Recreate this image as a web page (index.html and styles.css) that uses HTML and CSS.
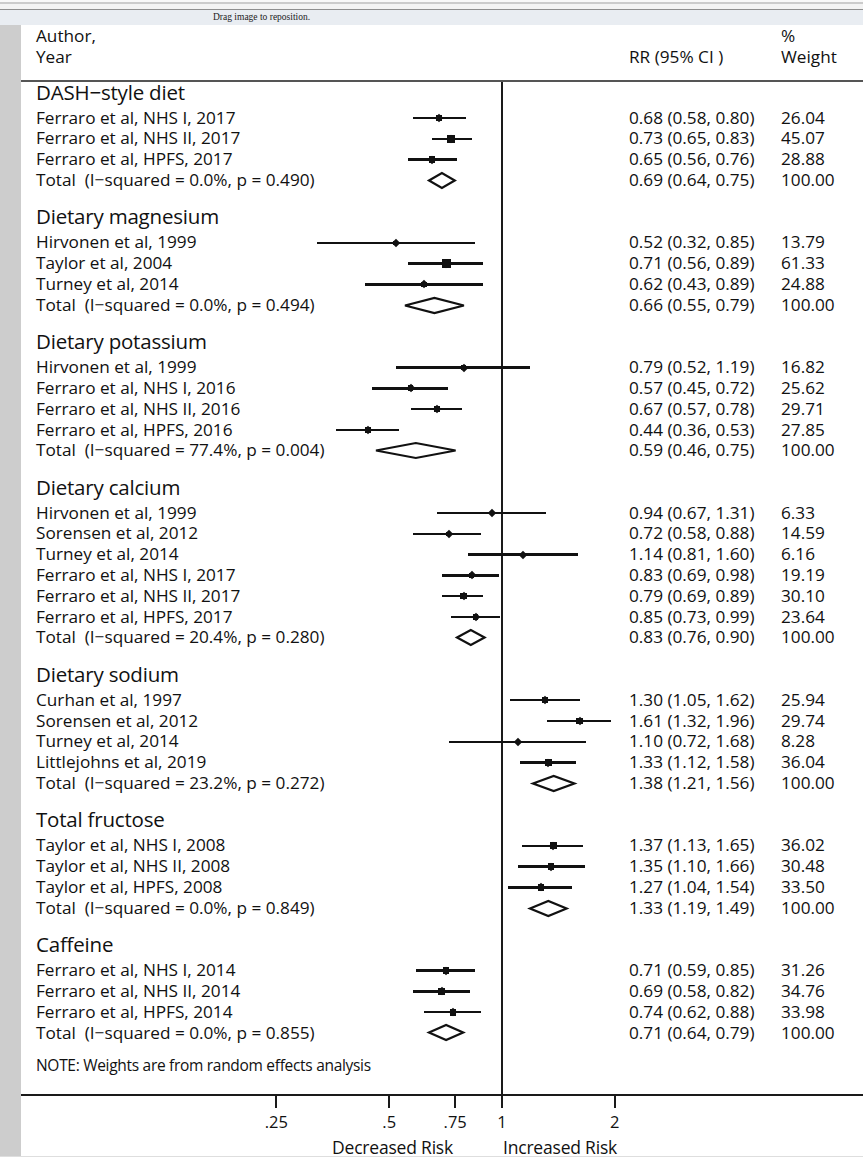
FILE: index.html
```html
<!DOCTYPE html>
<html lang="en">
<head>
<meta charset="utf-8">
<title>Forest plot</title>
<link rel="stylesheet" href="styles.css">
</head>
<body>
<div class="topbar"></div>
<div class="dragbar"><span>Drag image to reposition.</span></div>
<div class="main">
  <div class="strip"></div>
  <div class="content">
    <div class="colhead">
      <div class="ch-label">Author,<br>Year</div>
      <div class="ch-rr">RR (95% CI )</div>
      <div class="ch-w">%<br>Weight</div>
    </div>
    <div class="body">
      <div class="refline"></div>

      <section class="group first">
        <div class="ghead">DASH−style diet</div>
        <div class="row" style="--lo:392.4px;--hi:444.7px;--e:418.2px;--s:5.9px"><span class="lab">Ferraro et al, NHS I, 2017</span><span class="rr">0.68 (0.58, 0.80)</span><span class="w">26.04</span><span class="ci"></span><span class="box"></span><span class="pt"></span></div>
        <div class="row" style="--lo:410.9px;--hi:450.7px;--e:429.8px;--s:7.7px"><span class="lab">Ferraro et al, NHS II, 2017</span><span class="rr">0.73 (0.65, 0.83)</span><span class="w">45.07</span><span class="ci"></span><span class="box"></span><span class="pt"></span></div>
        <div class="row" style="--lo:386.6px;--hi:436.3px;--e:410.9px;--s:6.2px"><span class="lab">Ferraro et al, HPFS, 2017</span><span class="rr">0.65 (0.56, 0.76)</span><span class="w">28.88</span><span class="ci"></span><span class="box"></span><span class="pt"></span></div>
        <div class="row total" style="--lo:408.4px;--hi:434.2px"><span class="lab">Total  (I−squared = 0.0%, p = 0.490)</span><span class="rr">0.69 (0.64, 0.75)</span><span class="w">100.00</span><svg class="dia" viewBox="0 0 100 100" preserveAspectRatio="none"><polygon points="0,50 50,0 100,50 50,100"/></svg></div>
      </section>

      <section class="group">
        <div class="ghead">Dietary magnesium</div>
        <div class="row" style="--lo:295.6px;--hi:454.5px;--e:374.6px;--s:4.3px"><span class="lab">Hirvonen et al, 1999</span><span class="rr">0.52 (0.32, 0.85)</span><span class="w">13.79</span><span class="ci"></span><span class="box"></span><span class="pt"></span></div>
        <div class="row" style="--lo:386.6px;--hi:462.0px;--e:425.3px;--s:9px"><span class="lab">Taylor et al, 2004</span><span class="rr">0.71 (0.56, 0.89)</span><span class="w">61.33</span><span class="ci"></span><span class="box"></span><span class="pt"></span></div>
        <div class="row" style="--lo:343.7px;--hi:462.0px;--e:403.2px;--s:5.7px"><span class="lab">Turney et al, 2014</span><span class="rr">0.62 (0.43, 0.89)</span><span class="w">24.88</span><span class="ci"></span><span class="box"></span><span class="pt"></span></div>
        <div class="row total" style="--lo:383.7px;--hi:442.6px"><span class="lab">Total  (I−squared = 0.0%, p = 0.494)</span><span class="rr">0.66 (0.55, 0.79)</span><span class="w">100.00</span><svg class="dia" viewBox="0 0 100 100" preserveAspectRatio="none"><polygon points="0,50 50,0 100,50 50,100"/></svg></div>
      </section>

      <section class="group">
        <div class="ghead">Dietary potassium</div>
        <div class="row" style="--lo:374.6px;--hi:509.3px;--e:442.6px;--s:4.7px"><span class="lab">Hirvonen et al, 1999</span><span class="rr">0.79 (0.52, 1.19)</span><span class="w">16.82</span><span class="ci"></span><span class="box"></span><span class="pt"></span></div>
        <div class="row" style="--lo:351.1px;--hi:427.5px;--e:389.5px;--s:5.8px"><span class="lab">Ferraro et al, NHS I, 2016</span><span class="rr">0.57 (0.45, 0.72)</span><span class="w">25.62</span><span class="ci"></span><span class="box"></span><span class="pt"></span></div>
        <div class="row" style="--lo:389.5px;--hi:440.6px;--e:415.8px;--s:6.3px"><span class="lab">Ferraro et al, NHS II, 2016</span><span class="rr">0.67 (0.57, 0.78)</span><span class="w">29.71</span><span class="ci"></span><span class="box"></span><span class="pt"></span></div>
        <div class="row" style="--lo:314.7px;--hi:377.7px;--e:347.4px;--s:6.1px"><span class="lab">Ferraro et al, HPFS, 2016</span><span class="rr">0.44 (0.36, 0.53)</span><span class="w">27.85</span><span class="ci"></span><span class="box"></span><span class="pt"></span></div>
        <div class="row total" style="--lo:354.6px;--hi:434.2px"><span class="lab">Total  (I−squared = 77.4%, p = 0.004)</span><span class="rr">0.59 (0.46, 0.75)</span><span class="w">100.00</span><svg class="dia" viewBox="0 0 100 100" preserveAspectRatio="none"><polygon points="0,50 50,0 100,50 50,100"/></svg></div>
      </section>

      <section class="group">
        <div class="ghead">Dietary calcium</div>
        <div class="row" style="--lo:415.8px;--hi:524.9px;--e:470.9px;--s:2.9px"><span class="lab">Hirvonen et al, 1999</span><span class="rr">0.94 (0.67, 1.31)</span><span class="w">6.33</span><span class="ci"></span><span class="box"></span><span class="pt"></span></div>
        <div class="row" style="--lo:392.4px;--hi:460.2px;--e:427.5px;--s:4.4px"><span class="lab">Sorensen et al, 2012</span><span class="rr">0.72 (0.58, 0.88)</span><span class="w">14.59</span><span class="ci"></span><span class="box"></span><span class="pt"></span></div>
        <div class="row" style="--lo:446.7px;--hi:557.5px;--e:502.3px;--s:2.9px"><span class="lab">Turney et al, 2014</span><span class="rr">1.14 (0.81, 1.60)</span><span class="w">6.16</span><span class="ci"></span><span class="box"></span><span class="pt"></span></div>
        <div class="row" style="--lo:420.6px;--hi:477.7px;--e:450.7px;--s:5px"><span class="lab">Ferraro et al, NHS I, 2017</span><span class="rr">0.83 (0.69, 0.98)</span><span class="w">19.19</span><span class="ci"></span><span class="box"></span><span class="pt"></span></div>
        <div class="row" style="--lo:420.6px;--hi:462.0px;--e:442.6px;--s:6.3px"><span class="lab">Ferraro et al, NHS II, 2017</span><span class="rr">0.79 (0.69, 0.89)</span><span class="w">30.10</span><span class="ci"></span><span class="box"></span><span class="pt"></span></div>
        <div class="row" style="--lo:429.8px;--hi:479.4px;--e:454.5px;--s:5.6px"><span class="lab">Ferraro et al, HPFS, 2017</span><span class="rr">0.85 (0.73, 0.99)</span><span class="w">23.64</span><span class="ci"></span><span class="box"></span><span class="pt"></span></div>
        <div class="row total" style="--lo:436.3px;--hi:463.9px"><span class="lab">Total  (I−squared = 20.4%, p = 0.280)</span><span class="rr">0.83 (0.76, 0.90)</span><span class="w">100.00</span><svg class="dia" viewBox="0 0 100 100" preserveAspectRatio="none"><polygon points="0,50 50,0 100,50 50,100"/></svg></div>
      </section>

      <section class="group">
        <div class="ghead">Dietary sodium</div>
        <div class="row" style="--lo:488.9px;--hi:559.5px;--e:523.7px;--s:5.9px"><span class="lab">Curhan et al, 1997</span><span class="rr">1.30 (1.05, 1.62)</span><span class="w">25.94</span><span class="ci"></span><span class="box"></span><span class="pt"></span></div>
        <div class="row" style="--lo:526.2px;--hi:590.5px;--e:558.5px;--s:6.3px"><span class="lab">Sorensen et al, 2012</span><span class="rr">1.61 (1.32, 1.96)</span><span class="w">29.74</span><span class="ci"></span><span class="box"></span><span class="pt"></span></div>
        <div class="row" style="--lo:427.5px;--hi:565.4px;--e:496.5px;--s:3.3px"><span class="lab">Turney et al, 2014</span><span class="rr">1.10 (0.72, 1.68)</span><span class="w">8.28</span><span class="ci"></span><span class="box"></span><span class="pt"></span></div>
        <div class="row" style="--lo:499.4px;--hi:555.4px;--e:527.4px;--s:6.9px"><span class="lab">Littlejohns et al, 2019</span><span class="rr">1.33 (1.12, 1.58)</span><span class="w">36.04</span><span class="ci"></span><span class="box"></span><span class="pt"></span></div>
        <div class="row total" style="--lo:512.0px;--hi:553.4px"><span class="lab">Total  (I−squared = 23.2%, p = 0.272)</span><span class="rr">1.38 (1.21, 1.56)</span><span class="w">100.00</span><svg class="dia" viewBox="0 0 100 100" preserveAspectRatio="none"><polygon points="0,50 50,0 100,50 50,100"/></svg></div>
      </section>

      <section class="group">
        <div class="ghead">Total fructose</div>
        <div class="row" style="--lo:500.9px;--hi:562.5px;--e:532.2px;--s:6.9px"><span class="lab">Taylor et al, NHS I, 2008</span><span class="rr">1.37 (1.13, 1.65)</span><span class="w">36.02</span><span class="ci"></span><span class="box"></span><span class="pt"></span></div>
        <div class="row" style="--lo:496.5px;--hi:563.5px;--e:529.8px;--s:6.3px"><span class="lab">Taylor et al, NHS II, 2008</span><span class="rr">1.35 (1.10, 1.66)</span><span class="w">30.48</span><span class="ci"></span><span class="box"></span><span class="pt"></span></div>
        <div class="row" style="--lo:487.4px;--hi:551.3px;--e:519.9px;--s:6.7px"><span class="lab">Taylor et al, HPFS, 2008</span><span class="rr">1.27 (1.04, 1.54)</span><span class="w">33.50</span><span class="ci"></span><span class="box"></span><span class="pt"></span></div>
        <div class="row total" style="--lo:509.3px;--hi:545.9px"><span class="lab">Total  (I−squared = 0.0%, p = 0.849)</span><span class="rr">1.33 (1.19, 1.49)</span><span class="w">100.00</span><svg class="dia" viewBox="0 0 100 100" preserveAspectRatio="none"><polygon points="0,50 50,0 100,50 50,100"/></svg></div>
      </section>

      <section class="group">
        <div class="ghead">Caffeine</div>
        <div class="row" style="--lo:395.1px;--hi:454.5px;--e:425.3px;--s:6.4px"><span class="lab">Ferraro et al, NHS I, 2014</span><span class="rr">0.71 (0.59, 0.85)</span><span class="w">31.26</span><span class="ci"></span><span class="box"></span><span class="pt"></span></div>
        <div class="row" style="--lo:392.4px;--hi:448.7px;--e:420.6px;--s:6.8px"><span class="lab">Ferraro et al, NHS II, 2014</span><span class="rr">0.69 (0.58, 0.82)</span><span class="w">34.76</span><span class="ci"></span><span class="box"></span><span class="pt"></span></div>
        <div class="row" style="--lo:403.2px;--hi:460.2px;--e:432.0px;--s:6.7px"><span class="lab">Ferraro et al, HPFS, 2014</span><span class="rr">0.74 (0.62, 0.88)</span><span class="w">33.98</span><span class="ci"></span><span class="box"></span><span class="pt"></span></div>
        <div class="row total" style="--lo:408.4px;--hi:442.6px"><span class="lab">Total  (I−squared = 0.0%, p = 0.855)</span><span class="rr">0.71 (0.64, 0.79)</span><span class="w">100.00</span><svg class="dia" viewBox="0 0 100 100" preserveAspectRatio="none"><polygon points="0,50 50,0 100,50 50,100"/></svg></div>
      </section>

      <div class="note">NOTE: Weights are from random effects analysis</div>
    </div>

    <div class="axis">
      <div class="ticks">
        <span class="tick" style="--x:255.4px"></span>
        <span class="tick" style="--x:368.2px"></span>
        <span class="tick" style="--x:434.2px"></span>
        <span class="tick" style="--x:481px"></span>
        <span class="tick" style="--x:593.8px"></span>
      </div>
      <div class="ticklabels">
        <span class="tl" style="--x:255.4px">.25</span>
        <span class="tl" style="--x:368.2px">.5</span>
        <span class="tl" style="--x:434.2px">.75</span>
        <span class="tl" style="--x:481px">1</span>
        <span class="tl" style="--x:593.8px">2</span>
      </div>
      <div class="risk">
        <span class="dec">Decreased Risk</span>
        <span class="inc">Increased Risk</span>
      </div>
    </div>
  </div>
</div>
</body>
</html>
```

FILE: styles.css
```css
* { box-sizing: border-box; }

html, body {
  margin: 0;
  padding: 0;
  background: #ffffff;
}

body {
  width: 863px;
  height: 1157px;
  overflow: hidden;
  font-family: "Open Sans", "Noto Sans", "Liberation Sans", sans-serif;
  color: #111;
}

/* viewer chrome */
.topbar {
  height: 10px;
  background: #f3f3f3;
  border-bottom: 1px solid #8e8e8e;
  box-shadow: inset 0 2px 0 #f8f8f8, inset 0 4px 0 #cbcbcb;
}

.dragbar {
  height: 15px;
  background: #e9edf2;
  padding-left: 213px;
  font-family: "Liberation Serif", serif;
  font-size: 9.5px;
  line-height: 15px;
  color: #222;
}

.main {
  display: flex;
  height: 1132px;
  border-bottom: 1px solid #dedede;
}

.strip {
  width: 21px;
  flex: none;
  background: #cdcdcd;
}

.content {
  flex: 1;
  position: relative;
}

/* column headings */
.colhead {
  display: grid;
  grid-template-columns: 593px 152px 1fr;
  height: 57px;
  padding-left: 15px;
  font-size: 17.2px;
  line-height: 21px;
  border-bottom: 2px solid #555;
}

.ch-rr {
  padding-top: 21px;
}

/* plot body */
.body {
  position: relative;
}

.refline {
  position: absolute;
  left: 480px;
  top: 0;
  bottom: 0;
  width: 2px;
  background: #1a1a1a;
}

.group {
  margin-top: 10.4px;
}

.group.first {
  margin-top: 0;
}

.ghead {
  padding-left: 15px;
  font-size: 20.5px;
  letter-spacing: -0.2px;
  height: 31.2px;
  line-height: 31.2px;
  white-space: nowrap;
}

.group.first .ghead {
  height: 25.6px;
  line-height: 21px;
}

.row {
  position: relative;
  display: grid;
  grid-template-columns: 593px 152px 1fr;
  height: 20.8px;
  padding-left: 15px;
  font-size: 17.2px;
  line-height: 20.8px;
  white-space: pre;
}

.ci {
  position: absolute;
  left: var(--lo);
  width: calc(var(--hi) - var(--lo));
  top: calc(50% - 1.2px);
  height: 2.4px;
  background: #111;
}

.box {
  position: absolute;
  left: calc(var(--e) - var(--s) / 2);
  top: calc(50% - var(--s) / 2);
  width: var(--s);
  height: var(--s);
  background: #111;
}

.pt {
  position: absolute;
  left: calc(var(--e) - 3px);
  top: calc(50% - 3px);
  width: 6px;
  height: 6px;
  background: #111;
  transform: rotate(45deg);
}

.dia {
  position: absolute;
  left: var(--lo);
  width: calc(var(--hi) - var(--lo));
  top: calc(50% - 7.5px);
  height: 15px;
  overflow: visible;
}

.dia polygon {
  fill: none;
  stroke: #111;
  stroke-width: 2.2px;
  vector-effect: non-scaling-stroke;
  stroke-linejoin: miter;
}

.note {
  padding: 12px 0 18.4px 15px;
  font-size: 15.5px;
  line-height: 20px;
  letter-spacing: -0.3px;
}

/* axis */
.axis {
  border-top: 2px solid #1a1a1a;
}

.ticks {
  position: relative;
  height: 12px;
}

.tick {
  position: absolute;
  left: calc(var(--x) - 1px);
  top: 0;
  width: 2px;
  height: 12px;
  background: #1a1a1a;
}

.ticklabels {
  position: relative;
  height: 20px;
  margin-top: 4px;
  font-size: 16.5px;
  line-height: 20px;
}

.tl {
  position: absolute;
  left: var(--x);
  top: 0;
  transform: translateX(-50%);
}

.risk {
  display: flex;
  margin-top: 5.5px;
  font-size: 17.5px;
  line-height: 20px;
  letter-spacing: -0.2px;
}

.dec {
  width: 432px;
  text-align: right;
}

.inc {
  margin-left: 50px;
}
```
